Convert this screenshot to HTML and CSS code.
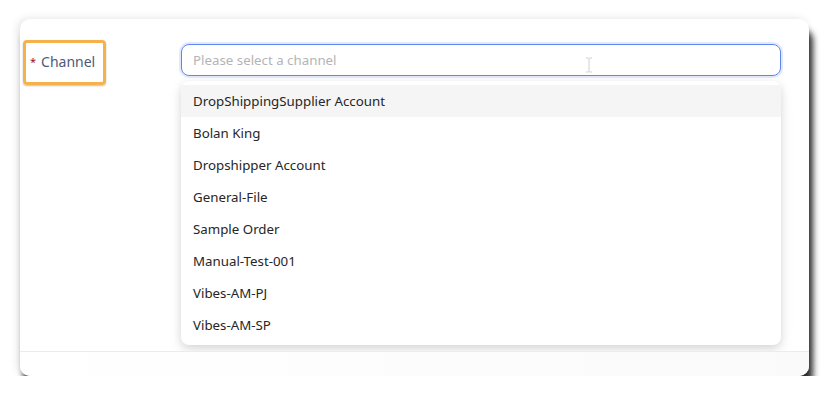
FILE: index.html
```html
<!DOCTYPE html>
<html lang="en">

<head>
    <meta charset="UTF-8">
    <meta name="viewport" content="width=device-width, initial-scale=1.0">
    <title>Channel select</title>
    <link rel="stylesheet" href="styles.css">
</head>

<body>
    <div class="card">
        <div class="card-body">
            <div class="form-row">
                <div class="label-box">
                    <span class="required">*</span>
                    <span class="label-text">Channel</span>
                </div>
                <div class="select-wrap">
                    <div class="select-input">
                        <span class="placeholder">Please select a channel</span>
                        <svg class="ibeam" width="8" height="16" viewBox="0 0 8 16">
                            <path d="M1 1h2.5M4.5 1H7M4 1v14M1 15h2.5M4.5 15H7" stroke="#cfcfcf" stroke-width="1" fill="none"/>
                        </svg>
                    </div>
                    <ul class="dropdown">
                        <li class="option active">DropShippingSupplier Account</li>
                        <li class="option">Bolan King</li>
                        <li class="option">Dropshipper Account</li>
                        <li class="option">General-File</li>
                        <li class="option">Sample Order</li>
                        <li class="option">Manual-Test-001</li>
                        <li class="option">Vibes-AM-PJ</li>
                        <li class="option">Vibes-AM-SP</li>
                    </ul>
                </div>
            </div>
        </div>
        <div class="card-footer"></div>
    </div>
</body>

</html>
```

FILE: styles.css
```css
body {
    margin: 0;
    background: #fff;
    font-family: "Noto Sans", "Open Sans", sans-serif;
}

.card {
    margin: 19px 0 0 20px;
    width: 789px;
    height: 357px;
    background: #fff;
    border-radius: 10px;
    box-shadow: 4px 11px 6px rgba(0, 0, 0, 0.82), -2px 0 8px rgba(0, 0, 0, 0.12);
    display: flex;
    flex-direction: column;
}

.card-body {
    flex: 1;
    padding: 21px 28px 0 3px;
}

.card-footer {
    height: 24px;
    border-top: 1px solid #ececec;
    border-radius: 0 0 10px 10px;
    background: linear-gradient(90deg, #fff 0%, #fafafa 100%);
}

.form-row {
    display: flex;
    align-items: flex-start;
}

.label-box {
    width: 73px;
    height: 36px;
    border: 3px solid #f6b24a;
    border-radius: 4px;
    display: flex;
    align-items: center;
    padding: 0 0 3px 4px;
    margin-right: 75px;
    box-shadow: 0 1px 2px rgba(0, 0, 0, 0.25);
}

.required {
    color: #9a1020;
    font-size: 11px;
    margin-right: 5px;
}

.label-text {
    color: #4c5a78;
    font-size: 14px;
}

.select-wrap {
    flex: 1;
    padding-top: 4px;
}

.select-input {
    height: 30px;
    border: 1px solid #5d86ef;
    border-radius: 8px;
    box-shadow: 0 0 0 2px rgba(93, 134, 239, 0.18);
    display: flex;
    align-items: center;
    padding: 0 11px;
    position: relative;
    font-size: 13.3px;
}

.placeholder {
    color: #b4b4b4;
}

.ibeam {
    position: absolute;
    left: 403px;
    top: 12px;
}

.dropdown {
    list-style: none;
    margin: 5px 0 0;
    padding: 4px 0;
    background: #fff;
    border-radius: 8px;
    box-shadow: 0 3px 8px rgba(0, 0, 0, 0.12), 0 6px 16px rgba(0, 0, 0, 0.06);
    overflow: hidden;
}

.option {
    height: 32px;
    line-height: 32px;
    padding: 0 12px;
    font-size: 13.3px;
    color: #262626;
}

.option.active {
    background: #f5f5f5;
}
```
